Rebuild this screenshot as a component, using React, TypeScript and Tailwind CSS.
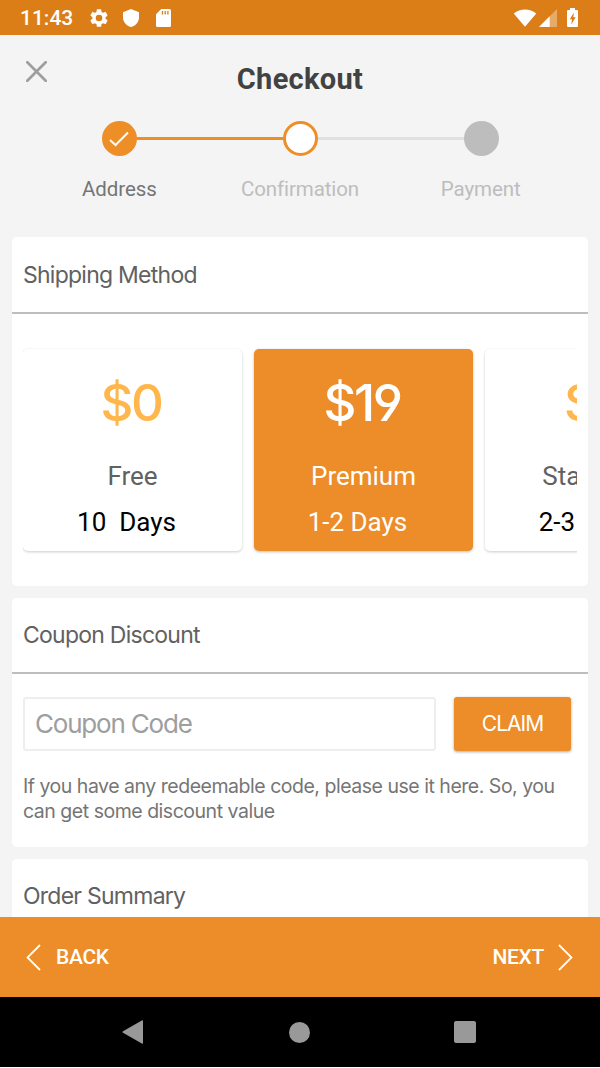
import clsx from "clsx";

const methods = [
  { price: "$0", name: "Free", days: "10\u00a0 Days", active: false },
  { price: "$19", name: "Premium", days: "1-2 Days", active: true },
  { price: "$9", name: "Standard", days: "2-3 Days", active: false },
];

const StatusBar = () => {
  return (
    <div className="flex h-[35px] shrink-0 items-center bg-[#db7e17] pl-[20px] pr-[21px] text-white">
      <span className="w-[68px] pt-[2px] text-[21px] leading-none font-medium">11:43</span>
      <svg className="h-[22px] w-[22px] shrink-0" viewBox="0 0 24 24" fill="currentColor">
        <path d="M19.14 12.94c.04-.3.06-.61.06-.94s-.02-.64-.07-.94l2.03-1.58c.18-.14.23-.41.12-.61l-1.92-3.32c-.12-.22-.37-.29-.59-.22l-2.39.96c-.5-.38-1.03-.7-1.62-.94l-.36-2.54A.48.48 0 0 0 13.92 2.4h-3.84c-.24 0-.43.17-.47.41l-.36 2.54c-.59.24-1.13.57-1.62.94l-2.39-.96c-.22-.08-.47 0-.59.22L2.74 8.87c-.12.21-.08.47.12.61l2.03 1.58c-.05.3-.09.63-.09.94s.02.64.07.94l-2.03 1.58c-.18.14-.23.41-.12.61l1.92 3.32c.12.22.37.29.59.22l2.39-.96c.5.38 1.03.7 1.62.94l.36 2.54c.05.24.24.41.48.41h3.84c.24 0 .44-.17.47-.41l.36-2.54c.59-.24 1.13-.56 1.62-.94l2.39.96c.22.08.47 0 .59-.22l1.92-3.32c.12-.22.07-.47-.12-.61l-2.01-1.58zM12 15.6A3.6 3.6 0 1 1 12 8.4a3.6 3.6 0 0 1 0 7.2z" />
      </svg>
      <svg className="ml-[13px] h-[18px] w-[16px] shrink-0" viewBox="0 0 16 18" fill="currentColor">
        <path d="M8 0 16 3.2V8.5C16 13 12.5 17 8 18 3.5 17 0 13 0 8.5V3.2z" />
      </svg>
      <svg className="ml-[17px] h-[18px] w-[15px] shrink-0" viewBox="0 0 15 18">
        <path d="M5.3 0H13.5Q15 0 15 1.5V16.5Q15 18 13.5 18H1.5Q0 18 0 16.5V5.3z" fill="white" />
        <path d="M6.5 2v3.5M9.2 2v3.5M11.9 2v3.5" stroke="#db7e17" strokeWidth="1.3" />
      </svg>
      <svg className="ml-auto h-[18px] w-[24px] shrink-0" viewBox="0 0 24 18" fill="currentColor">
        <path d="M.7 4.4C7.5-.8 16.5-.8 23.3 4.4L12 17.7z" />
      </svg>
      <svg className="ml-[2px] h-[18px] w-[18px] shrink-0" viewBox="0 0 18 18" fill="currentColor">
        <path d="M18 0V18H0z" opacity=".35" />
        <path d="M10.7 7.3V18H0z" />
      </svg>
      <svg className="mr-px ml-[10px] h-[19px] w-[11px] shrink-0" viewBox="0 0 11 19">
        <path d="M3 0h5v2h2q1 0 1 1v15q0 1-1 1H1q-1 0-1-1V3q0-1 1-1h2z" fill="white" />
        <path d="M6.9 4.5 2.8 11.2H5L4.3 16.5 8.7 9.2H6.3z" fill="#db7e17" />
      </svg>
    </div>
  );
};

const Header = () => {
  return (
    <header className="relative h-[202px] shrink-0">
      <svg className="absolute top-[26px] left-[26px] h-[21px] w-[21px]" viewBox="0 0 21 21">
        <path d="M1.3 1.3 19.7 19.7M19.7 1.3 1.3 19.7" stroke="#9e9e9e" strokeWidth="2.7" strokeLinecap="round" />
      </svg>
      <h1 className="pt-[29px] text-center text-[29px] leading-[30px] font-bold tracking-[0.3px] text-[#424242]">Checkout</h1>

      {/* Stepper */}
      <div className="mt-[27px] flex items-center pr-[101px] pl-[102px]">
        <div className="flex h-[35px] w-[35px] items-center justify-center rounded-full bg-[#ed8e26] pr-[2px]">
          <svg className="h-[16px] w-[20px]" viewBox="0 0 20 16">
            <path d="M1 9 6.5 14 19 1.5" fill="none" stroke="white" strokeWidth="2" />
          </svg>
        </div>
        <div className="h-[3px] flex-1 bg-[#ed8e26]" />
        <div className="h-[35px] w-[35px] rounded-full border-[3px] border-[#ed8e26] bg-white" />
        <div className="h-[3px] flex-1 bg-[#e0e0e0]" />
        <div className="h-[35px] w-[35px] rounded-full bg-[#bdbdbd]" />
      </div>
      <div className="mt-[21px] grid grid-cols-3 px-[29px] text-center text-[20.5px] leading-[25px] tracking-[-0.1px]">
        <span className="text-[#757575]">Address</span>
        <span className="text-[#bdbdbd]">Confirmation</span>
        <span className="text-[#bdbdbd]">Payment</span>
      </div>
    </header>
  );
};

const CardTitle = ({ children }: { children: string }) => {
  return (
    <h2 className="flex h-[76px] items-center border-b-2 border-[#bdbdbd] pl-[11px] font-['Inter'] text-[23px] tracking-[-0.75px] text-[#616161]">
      {children}
    </h2>
  );
};

export default function App() {
  return (
    <div className="flex h-[1068px] w-[600px] flex-col overflow-hidden bg-[#f4f4f4] font-['Roboto',sans-serif]">
      <StatusBar />
      <Header />

      <main className="flex min-h-0 flex-1 flex-col gap-[12px] overflow-hidden px-[12px]">
        <section className="h-[349px] shrink-0 rounded-[5px] bg-white pt-px">
          <CardTitle>Shipping Method</CardTitle>
          <div className="mx-[11px] flex h-[260px] gap-[12px] overflow-hidden pt-[35px]">
            {methods.map((m) => (
              <div
                key={m.name}
                className={clsx(
                  "flex h-[202px] w-[219px] shrink-0 flex-col items-center rounded-[5px]",
                  m.active ? "bg-[#ec8d29] text-white shadow-[0_1px_3px_rgba(0,0,0,0.26)]" : "bg-white text-black shadow-[0_1px_3px_rgba(0,0,0,0.2)]"
                )}
              >
                <p
                  className={clsx(
                    "mt-[24px] mr-[3px] font-['Inter'] text-[51px] leading-[60px] font-medium tracking-[-2.5px] [font-feature-settings:'cv04']",
                    !m.active && "text-[#ffb74d]"
                  )}
                >
                  {m.price}
                </p>
                <p className={clsx("mt-[27px] text-[26px] leading-[32px]", !m.active && "text-[#616161]")}>{m.name}</p>
                <p className="mt-[14px] mr-[12px] text-[26px] leading-[32px]">{m.days}</p>
              </div>
            ))}
          </div>
        </section>

        <section className="h-[249px] shrink-0 rounded-[5px] bg-white">
          <CardTitle>Coupon Discount</CardTitle>
          <div className="flex pt-[23px] pl-[11px]">
            <div className="flex h-[54px] w-[413px] items-center rounded-[3px] border-2 border-[#eeeeee] pb-px pl-[10px] font-['Inter'] text-[26px] tracking-[-1.2px] text-[#9e9e9e]">
              Coupon Code
            </div>
            <button className="ml-[18px] h-[54px] w-[117px] rounded-[3px] bg-[#ec8d29] font-['Inter'] text-[21px] tracking-[-1px] text-white shadow-[0_1px_3px_rgba(0,0,0,0.35)]">
              CLAIM
            </button>
          </div>
          <p className="mt-[23px] pl-[11px] font-['Inter'] text-[19.5px] leading-[25px] tracking-[-0.48px] text-[#757575]">
            If you have any redeemable code, please use it here. So, you
            <br />
            can get some discount value
          </p>
        </section>

        <section className="h-[240px] shrink-0 rounded-[5px] bg-white">
          <CardTitle>Order Summary</CardTitle>
        </section>
      </main>

      <footer className="flex h-[80px] shrink-0 items-center justify-between bg-[#ec8d29] pr-[27px] pl-[26px] text-[21px] font-medium tracking-[-0.3px] text-white">
        <button className="flex items-center gap-[15px]">
          <svg className="h-[27px] w-[15px]" viewBox="0 0 15 27">
            <path d="M14 1 1.5 13.5 14 26" fill="none" stroke="white" strokeWidth="1.8" />
          </svg>
          <span className="pt-[2px]">BACK</span>
        </button>
        <button className="flex items-center gap-[14px]">
          <span className="pt-[2px]">NEXT</span>
          <svg className="h-[27px] w-[15px]" viewBox="0 0 15 27">
            <path d="M1 1 13.5 13.5 1 26" fill="none" stroke="white" strokeWidth="1.8" />
          </svg>
        </button>
      </footer>

      {/* Android navigation */}
      <nav className="flex h-[70px] shrink-0 items-center justify-between bg-black pr-[124px] pl-[122px]">
        <svg className="h-[24px] w-[21px]" viewBox="0 0 21 24">
          <path d="M1 11.2 19.8.5Q21 0 21 1.2V22.8Q21 24 19.8 23.5L1 12.8Q-.2 12 1 11.2z" fill="#999" />
        </svg>
        <div className="ml-[2px] h-[21px] w-[21px] rounded-full bg-[#999]" />
        <div className="h-[22px] w-[22px] rounded-[2px] bg-[#999]" />
      </nav>
      <div className="h-px shrink-0 bg-white" />
    </div>
  );
}
